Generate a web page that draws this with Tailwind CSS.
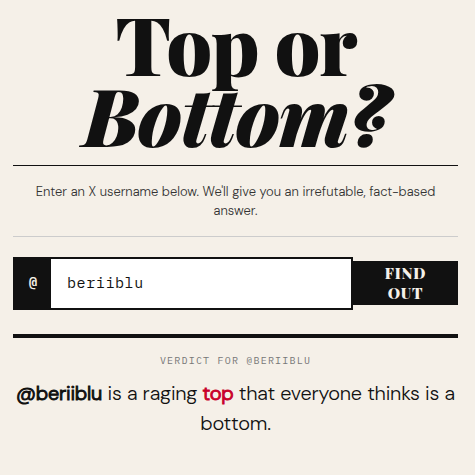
<!DOCTYPE html>
<html lang="en">
    <head>
        <meta charset="UTF-8">
        <meta name="viewport" content="width=device-width, initial-scale=1.0">
        <title>Top or Bottom?</title>
        <script src="https://cdn.jsdelivr.net/npm/@tailwindcss/browser@4"></script>
    </head>
    <body class="min-h-screen bg-[#f5f0e8] text-[#111111] font-['DM_Sans',Inter,sans-serif]">
        <main class="mx-auto max-w-2xl pt-[7px] pr-[17px] pb-8 pl-[13px]">
            <header class="text-center">
                <h1 class="border-b border-[#111111] pb-4 font-['Playfair_Display','Liberation_Serif',serif] text-[80px] leading-[71px] font-black tracking-[-0.02em]">
                    Top or<br><em>Bottom?</em>
                </h1>
                <p class="border-b border-[#cccccc] px-4 py-4 text-[13px] leading-[19px] font-light text-[#333333]">
                    Enter an X username below. We'll give you an irrefutable, fact-based answer.
                </p>
            </header>

            <form id="form" class="mt-5 flex items-start">
                <div class="flex h-[53px] min-w-0 flex-1 border-2 border-[#111111] bg-white">
                    <label for="username" class="flex w-9 shrink-0 items-center justify-center bg-[#111111] font-['IBM_Plex_Mono','Liberation_Mono',monospace] text-[15px] font-semibold text-[#f5f0e8]">@</label>
                    <input type="text" id="username" name="username" value="beriiblu" autocomplete="off" spellcheck="false" class="w-full min-w-0 px-4 font-['IBM_Plex_Mono','Liberation_Mono',monospace] text-[15px] tracking-[0.04em] outline-none">
                </div>
                <button type="submit" class="mt-1 w-[105px] shrink-0 bg-[#111111] px-6 py-0.5 font-['Playfair_Display','Liberation_Serif',serif] text-[15px] leading-5 font-black tracking-wider text-[#f5f0e8]">FIND OUT</button>
            </form>

            <section class="mt-6 border-t-4 border-[#111111] pt-[15px] text-center">
                <h2 class="font-['IBM_Plex_Mono','Liberation_Mono',monospace] text-[10px] leading-4 tracking-[0.12em] text-[#777777] uppercase">Verdict for <span id="label-name">@beriiblu</span></h2>
                <p class="mt-[9px] text-xl leading-[30px] font-light tracking-[-0.01em]"><strong id="name" class="font-light [-webkit-text-stroke:1px_#111111]">@beriiblu</strong> is a raging <strong class="font-light text-[#c8002a] [-webkit-text-stroke:1px_#c8002a]">top</strong> that everyone thinks is a bottom.</p>
            </section>
        </main>
    </body>
    <script>
    const form = document.getElementById('form');
    const username = document.getElementById('username');

    form.addEventListener('submit', function (e) {
        e.preventDefault();
        const value = username.value.trim();
        if (value == '') {
            return;
        }
        document.getElementById('label-name').textContent = '@' + value;
        document.getElementById('name').textContent = '@' + value;
    });
    </script>
</html>
